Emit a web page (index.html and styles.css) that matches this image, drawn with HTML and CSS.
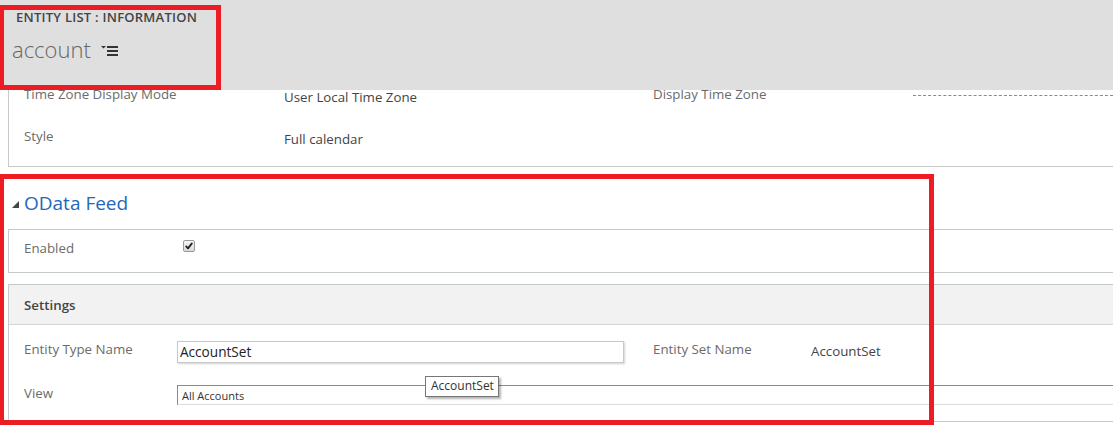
FILE: index.html
```html
<!DOCTYPE html>
<html>
<head>
<meta charset="utf-8">
<title>Entity List: account</title>
<link rel="stylesheet" href="styles.css">
</head>
<body>
<div class="page">
  <section class="sec sec-calendar">
    <div class="row">
      <div class="lbl w260">Time Zone Display Mode</div>
      <div class="val w369">User Local Time Zone</div>
      <div class="lbl w260">Display Time Zone</div>
      <div class="dashed"></div>
    </div>
    <div class="row">
      <div class="lbl w260">Style</div>
      <div class="val w369">Full calendar</div>
    </div>
  </section>

  <h2 class="sec-title">
    <svg class="tri" width="7" height="7" viewBox="0 0 7 7"><polygon points="7,0 7,7 0,7" fill="#444"/></svg>
    <span>OData Feed</span>
  </h2>

  <section class="sec sec-enabled">
    <div class="row">
      <div class="lbl w159">Enabled</div>
      <span class="check">
        <svg width="10" height="10" viewBox="0 0 10 10"><path d="M2.2 5.4 L4 7.4 L7.9 2.4" fill="none" stroke="#222" stroke-width="1.8" stroke-linecap="round" stroke-linejoin="round"/></svg>
      </span>
    </div>
  </section>

  <section class="sec sec-settings">
    <div class="sec-head">Settings</div>
    <div class="settings-body">
      <div class="row">
        <div class="lbl w153">Entity Type Name</div>
        <div class="input">AccountSet</div>
        <div class="lbl w158 ml29">Entity Set Name</div>
        <div class="val2">AccountSet</div>
      </div>
      <div class="row">
        <div class="lbl w153">View</div>
        <div class="select">All Accounts</div>
      </div>
    </div>
  </section>
</div>

<header class="topbar">
  <div class="crumb">ENTITY LIST : INFORMATION</div>
  <div class="entity">
    <span class="entity-name">account</span>
    <svg class="menu-ico" width="18" height="11" viewBox="0 0 18 11"><polygon points="0,0 5,0 2.5,2.6" fill="#333"/><rect x="6" y="0" width="11" height="2" fill="#333"/><rect x="6" y="4" width="11" height="2" fill="#333"/><rect x="6" y="8" width="11" height="2" fill="#333"/></svg>
  </div>
</header>

<div class="tooltip">AccountSet</div>

<div class="annot annot-1"></div>
<div class="annot annot-2"></div>
</body>
</html>
```

FILE: styles.css
```css
html, body {
  margin: 0;
  padding: 0;
  background: #fff;
  overflow: hidden;
}
body {
  width: 1113px;
  height: 438px;
  position: relative;
  font-family: "Segoe UI", "Open Sans", sans-serif;
  font-size: 13.3px;
  color: #444;
}

.page {
  padding-left: 8px;
}

.sec {
  border-left: 1px solid #c6c9c9;
  border-bottom: 1px solid #c6c9c9;
}

.row {
  display: flex;
  align-items: flex-start;
}

.lbl {
  color: #6b6b6b;
  line-height: 20px;
  white-space: nowrap;
  flex: none;
}
.val {
  color: #444;
  line-height: 20px;
  margin-top: 3px;
  flex: none;
}
.w260 { width: 260px; }
.w369 { width: 369px; }
.w159 { width: 159px; }
.w153 { width: 153px; }
.w158 { width: 158px; }
.ml29 { margin-left: 29px; }

.sec-calendar {
  padding: 84px 0 20px 15px;
}
.sec-calendar .row {
  height: 20px;
}
.sec-calendar .row + .row {
  margin-top: 22px;
}
.dashed {
  flex: 1;
  margin-top: 11px;
  border-top: 1px dashed #8a8a8a;
}

.sec-title {
  margin: 22px 0 12px 0;
  display: flex;
  align-items: center;
  height: 28px;
  font-weight: 400;
  font-size: 19px;
  color: #2268ba;
  padding-left: 4px;
}
.sec-title .tri {
  margin-right: 5px;
  margin-top: 3px;
}

.sec-enabled {
  border-top: 1px solid #c6c9c9;
  padding: 8px 0 14px 15px;
}
.sec-enabled .row {
  height: 20px;
}
.check {
  width: 10px;
  height: 10px;
  margin-top: 2px;
  border: 1px solid #9a9a9a;
  border-radius: 2px;
  background: linear-gradient(#f6f6f6, #d9d9d9);
  display: flex;
}

.sec-settings {
  margin-top: 11px;
  border-top: 1px solid #c6c9c9;
}
.sec-head {
  background: #f2f2f2;
  border-bottom: 1px solid #d4d6d6;
  padding: 10px 0 9px 15px;
  line-height: 20px;
  font-weight: 600;
  color: #444;
}
.settings-body {
  padding: 14px 0 16px 15px;
}
.settings-body .row + .row {
  margin-top: 20px;
}
.input {
  box-sizing: border-box;
  width: 447px;
  height: 22px;
  margin-top: 2px;
  border: 1px solid #c8c8c8;
  box-shadow: 1px 1px 2px rgba(0, 0, 0, 0.18);
  padding: 0 2px;
  font-size: 13.6px;
  line-height: 20px;
  color: #222;
  flex: none;
}
.val2 {
  margin-top: 2px;
  line-height: 20px;
  color: #444;
}
.select {
  flex: 1;
  box-sizing: border-box;
  height: 20px;
  margin-top: 2px;
  border-top: 1px solid #8a8a8a;
  border-left: 1px solid #8a8a8a;
  border-bottom: 1px solid #dcdcdc;
  padding: 2px 0 0 4px;
  font-size: 11px;
  line-height: 16px;
  color: #333;
}

.topbar {
  position: absolute;
  top: 0;
  left: 0;
  right: 0;
  height: 90px;
  background: #dfdfdf;
  box-sizing: border-box;
  padding: 8px 0 0 12px;
}
.crumb {
  padding-left: 4px;
  font-size: 13px;
  letter-spacing: 0.25px;
  font-weight: 600;
  line-height: 18px;
  color: #444;
}
.entity {
  margin-top: 8px;
  display: flex;
  align-items: center;
  height: 30px;
}
.entity-name {
  font-size: 22px;
  font-weight: 300;
  line-height: 30px;
  color: #666;
}
.menu-ico {
  margin-left: 10px;
  margin-top: 4px;
}

.tooltip {
  position: absolute;
  left: 425px;
  top: 376px;
  width: 74px;
  height: 21px;
  box-sizing: border-box;
  border: 1px solid #767676;
  background: #fff;
  box-shadow: 2px 2px 2px rgba(0, 0, 0, 0.3);
  font-size: 12px;
  line-height: 18px;
  color: #333;
  padding-left: 5px;
}

.annot {
  position: absolute;
  border: 5px solid #ed1c24;
  box-sizing: border-box;
}
.annot-1 {
  left: -1px;
  top: 5px;
  width: 222px;
  height: 85px;
}
.annot-2 {
  left: -1px;
  top: 174px;
  width: 935px;
  height: 251px;
}
```
